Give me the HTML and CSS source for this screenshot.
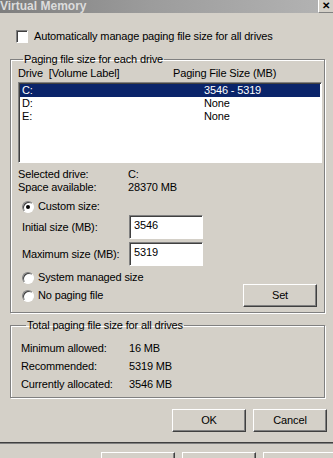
FILE: index.html
```html
<!DOCTYPE html>
<html lang="en">
<head>
    <meta charset="UTF-8">
    <meta name="viewport" content="width=device-width, initial-scale=1.0">
    <title>Virtual Memory</title>
    <link rel="stylesheet" href="styles.css">
</head>
<body>

    <div class="titlebar">
        <span class="title">Virtual Memory</span>
        <span class="close">&#x2715;</span>
    </div>

    <div class="dialog">

        <div class="check-row">
            <span class="checkbox"></span>
            <span>Automatically manage paging file size for all drives</span>
        </div>

        <fieldset class="group drives">
            <legend>Paging file size for each drive</legend>

            <div class="list-head">
                <span class="col-drive">Drive&nbsp; [Volume Label]</span>
                <span>Paging File Size (MB)</span>
            </div>

            <div class="listbox">
                <div class="list-row selected"><span class="col-letter">C:</span><span>3546 - 5319</span></div>
                <div class="list-row"><span class="col-letter">D:</span><span>None</span></div>
                <div class="list-row"><span class="col-letter">E:</span><span>None</span></div>
            </div>

            <div class="info first"><span class="info-label">Selected drive:</span><span>C:</span></div>
            <div class="info"><span class="info-label">Space available:</span><span>28370 MB</span></div>

            <div class="radio-row custom"><span class="radio checked"></span><span>Custom size:</span></div>

            <div class="size-row initial">
                <span class="size-label">Initial size (MB):</span>
                <span class="textbox">3546</span>
            </div>
            <div class="size-row maximum">
                <span class="size-label">Maximum size (MB):</span>
                <span class="textbox">5319</span>
            </div>

            <div class="radio-row system"><span class="radio"></span><span>System managed size</span></div>
            <div class="radio-row nopaging">
                <span class="radio"></span><span>No paging file</span>
                <span class="button set">Set</span>
            </div>
        </fieldset>

        <fieldset class="group totals">
            <legend>Total paging file size for all drives</legend>
            <div class="total"><span class="total-label">Minimum allowed:</span><span>16 MB</span></div>
            <div class="total"><span class="total-label">Recommended:</span><span>5319 MB</span></div>
            <div class="total"><span class="total-label">Currently allocated:</span><span>3546 MB</span></div>
        </fieldset>

        <div class="actions">
            <span class="button">OK</span>
            <span class="button">Cancel</span>
        </div>
    </div>

    <div class="behind">
        <span class="button"></span>
        <span class="button"></span>
        <span class="button"></span>
    </div>

</body>
</html>
```

FILE: styles.css
```css
html, body{
    margin: 0;
    height: 100%;
    overflow: hidden;
}

body{
    background-color: #d4d0c8;
    font-family: "Liberation Sans", Arial, sans-serif;
    font-size: 11px;
    letter-spacing: -0.15px;
    color: #000;
    line-height: 13px;
}

.titlebar{
    height: 13px;
    display: flex;
    justify-content: space-between;
    align-items: flex-start;
    background: linear-gradient(to right, #7e7e7e, #9c9c9c 45%, #b4b4b4);
}

.title{
    margin-left: 0;
    font-weight: bold;
    font-size: 12px;
    line-height: 13px;
    letter-spacing: 0;
    color: #dcdcdc;
}

.close{
    width: 14px;
    height: 12px;
    background-color: #d4d0c8;
    border-left: 1px solid #fff;
    border-bottom: 1px solid #808080;
    font-size: 10px;
    font-weight: bold;
    line-height: 12px;
    text-align: center;
}

.dialog{
    padding: 17px 6px 0 10px;
    height: 430px;
    box-sizing: border-box;
    border-bottom: 1px solid #404040;
    box-shadow: 0 1px 0 #808080;
}

.check-row{
    display: flex;
    align-items: center;
    margin-left: 6px;
}

.checkbox{
    width: 10px;
    height: 11px;
    margin-right: 6px;
    background-color: #fff;
    border: 1px solid;
    border-color: #808080 #fff #fff #808080;
    box-shadow: inset 1px 1px 0 #404040;
}

/* group boxes */

.group{
    margin: 0;
    width: 315px;
    box-sizing: border-box;
    border: 1px solid #808080;
    box-shadow: 1px 1px 0 #fff, inset 1px 1px 0 #fff;
    min-width: 0;
}

.group legend{
    padding: 0 1px;
    margin-left: 5px;
    line-height: 14px;
}

.drives{
    margin-top: 9px;
    padding: 0 2px 5px 7px;
    height: 261px;
}

.list-head{
    display: flex;
    height: 14px;
    line-height: 14px;
}

.col-drive{
    width: 155px;
}

.listbox{
    margin-top: 2px;
    height: 81px;
    box-sizing: border-box;
    background-color: #fff;
    border: 1px solid;
    border-color: #808080 #fff #fff #808080;
    box-shadow: inset 1px 1px 0 #404040;
    padding: 1px 0 0 1px;
}

.list-row{
    display: flex;
    height: 13px;
    line-height: 13px;
}

.list-row.selected{
    background-color: #0a246a;
    color: #fff;
    margin-right: 1px;
}

.col-letter{
    width: 182px;
    padding-left: 2px;
}

.info{
    display: flex;
    height: 13px;
}

.info.first{
    margin-top: 5px;
}

.info-label{
    width: 110px;
}

.radio-row{
    display: flex;
    align-items: center;
    height: 13px;
    padding-left: 4px;
}

.radio{
    width: 10px;
    height: 10px;
    margin-right: 4px;
    border-radius: 50%;
    background-color: #fff;
    border: 1px solid;
    border-color: #808080 #fff #fff #808080;
    box-shadow: inset 1px 1px 0 #404040;
    position: relative;
}

.radio.checked::after{
    content: "";
    position: absolute;
    left: 3px;
    top: 3px;
    width: 4px;
    height: 4px;
    border-radius: 50%;
    background-color: #000;
}

.custom{
    margin-top: 6px;
}

.size-row{
    display: flex;
    align-items: center;
    height: 24px;
    padding-left: 4px;
}

.initial{
    margin-top: 2px;
}

.maximum{
    margin-top: 3px;
}

.size-label{
    width: 107px;
}

.textbox{
    width: 74px;
    height: 24px;
    box-sizing: border-box;
    padding: 3px 0 0 4px;
    background-color: #fff;
    border: 1px solid;
    border-color: #808080 #fff #fff #808080;
    box-shadow: inset 1px 1px 0 #404040;
}

.system{
    margin-top: 5px;
}

.nopaging{
    height: 23px;
}

/* buttons */

.button{
    display: inline-block;
    width: 74px;
    height: 23px;
    box-sizing: border-box;
    line-height: 21px;
    text-align: center;
    background-color: #d4d0c8;
    border: 1px solid;
    border-color: #fff #404040 #404040 #fff;
    box-shadow: inset -1px -1px 0 #808080;
}

.set{
    margin-left: auto;
    margin-right: 5px;
}

.totals{
    margin-top: 5px;
    padding: 7px 0 4px 10px;
}

.total{
    display: flex;
    height: 18px;
    line-height: 18px;
}

.total-label{
    width: 108px;
}

.actions{
    display: flex;
    justify-content: flex-end;
    gap: 7px;
    margin-top: 11px;
}

.behind{
    display: flex;
    gap: 7px;
    padding: 9px 0 0 101px;
}

.behind .button{
    flex: none;
    height: 24px;
}
```
